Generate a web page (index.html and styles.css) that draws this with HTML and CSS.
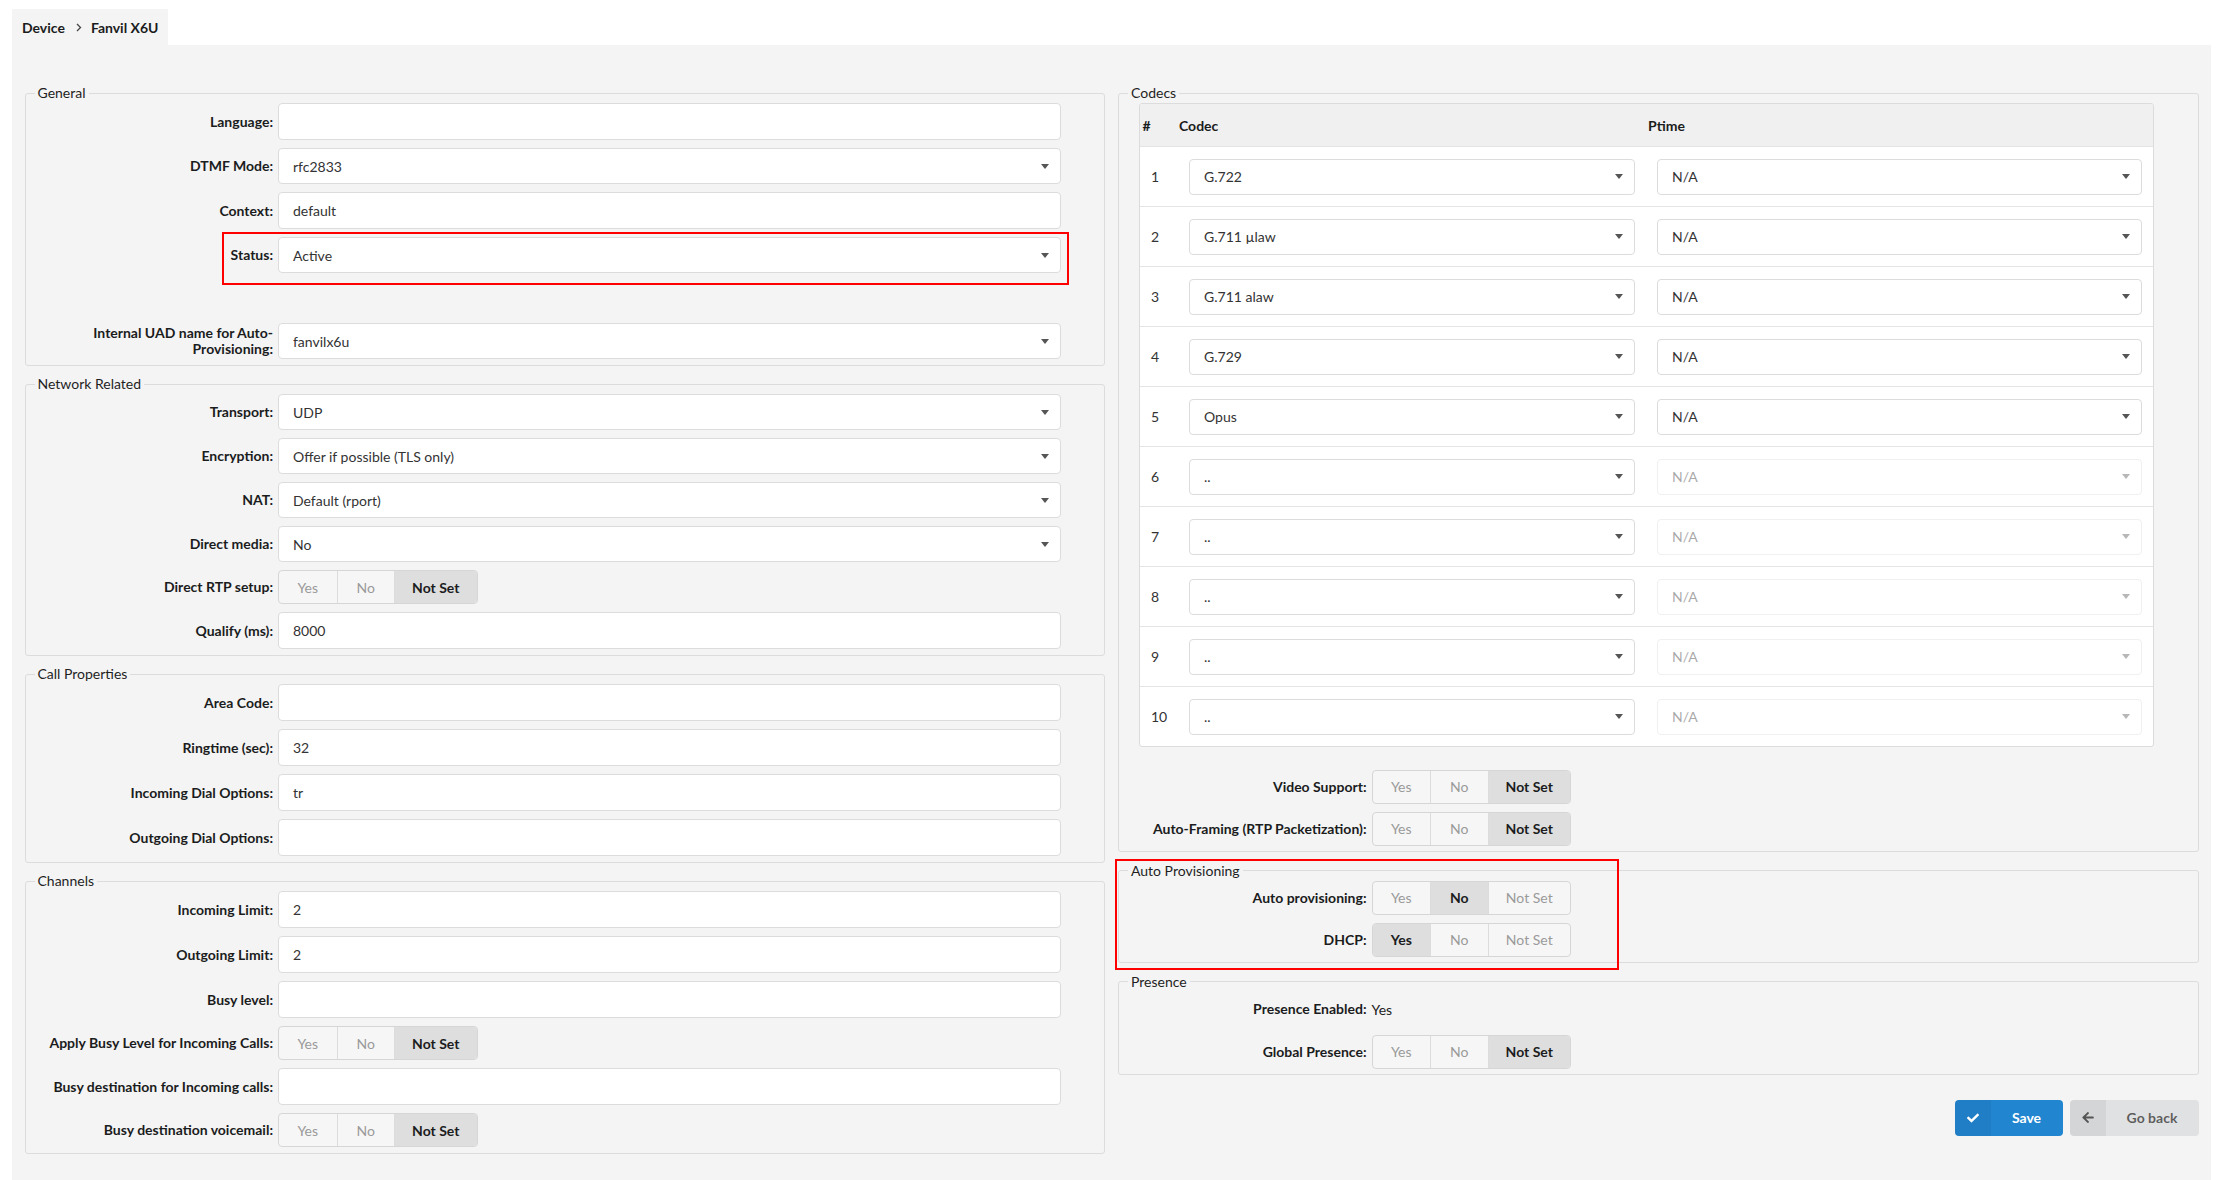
FILE: index.html
```html
<!DOCTYPE html>
<html lang="en">
<head>
<meta charset="utf-8">
<title>Device - Fanvil X6U</title>
<link rel="stylesheet" href="styles.css">
</head>
<body>
<div class="page">
  <div class="tabs">
    <div class="tab">
      <span>Device</span>
      <svg class="chev" width="6" height="9" viewBox="0 0 6 9"><path d="M1 1l3.5 3.5L1 8" fill="none" stroke="#444" stroke-width="1.3"/></svg>
      <span>Fanvil X6U</span>
    </div>
  </div>
  <div class="content">
    <div class="col">
      <fieldset class="fs">
        <legend>General</legend>
        <div class="field"><label>Language:</label><div class="input"></div></div>
        <div class="field"><label>DTMF Mode:</label><div class="input select"><span>rfc2833</span><svg class="caret" viewBox="0 0 8 5"><path d="M0 0h8L4 5z"/></svg></div></div>
        <div class="field"><label>Context:</label><div class="input">default</div></div>
        <div class="field annot status-annot"><label>Status:</label><div class="input select"><span>Active</span><svg class="caret" viewBox="0 0 8 5"><path d="M0 0h8L4 5z"/></svg></div></div>
        <div class="field spacer"></div>
        <div class="field"><label>Internal UAD name for Auto-<br>Provisioning:</label><div class="input select"><span>fanvilx6u</span><svg class="caret" viewBox="0 0 8 5"><path d="M0 0h8L4 5z"/></svg></div></div>
      </fieldset>

      <fieldset class="fs">
        <legend>Network Related</legend>
        <div class="field"><label>Transport:</label><div class="input select"><span>UDP</span><svg class="caret" viewBox="0 0 8 5"><path d="M0 0h8L4 5z"/></svg></div></div>
        <div class="field"><label>Encryption:</label><div class="input select"><span>Offer if possible (TLS only)</span><svg class="caret" viewBox="0 0 8 5"><path d="M0 0h8L4 5z"/></svg></div></div>
        <div class="field"><label>NAT:</label><div class="input select"><span>Default (rport)</span><svg class="caret" viewBox="0 0 8 5"><path d="M0 0h8L4 5z"/></svg></div></div>
        <div class="field"><label>Direct media:</label><div class="input select"><span>No</span><svg class="caret" viewBox="0 0 8 5"><path d="M0 0h8L4 5z"/></svg></div></div>
        <div class="field"><label>Direct RTP setup:</label><div class="toggle"><span>Yes</span><span>No</span><span class="on">Not Set</span></div></div>
        <div class="field"><label>Qualify (ms):</label><div class="input">8000</div></div>
      </fieldset>

      <fieldset class="fs">
        <legend>Call Properties</legend>
        <div class="field"><label>Area Code:</label><div class="input"></div></div>
        <div class="field"><label>Ringtime (sec):</label><div class="input">32</div></div>
        <div class="field"><label>Incoming Dial Options:</label><div class="input">tr</div></div>
        <div class="field"><label>Outgoing Dial Options:</label><div class="input"></div></div>
      </fieldset>

      <fieldset class="fs last">
        <legend>Channels</legend>
        <div class="field"><label>Incoming Limit:</label><div class="input">2</div></div>
        <div class="field"><label>Outgoing Limit:</label><div class="input">2</div></div>
        <div class="field"><label>Busy level:</label><div class="input"></div></div>
        <div class="field"><label>Apply Busy Level for Incoming Calls:</label><div class="toggle"><span>Yes</span><span>No</span><span class="on">Not Set</span></div></div>
        <div class="field"><label>Busy destination for Incoming calls:</label><div class="input"></div></div>
        <div class="field"><label>Busy destination voicemail:</label><div class="toggle"><span>Yes</span><span>No</span><span class="on">Not Set</span></div></div>
      </fieldset>
    </div>

    <div class="col">
      <fieldset class="fs">
        <legend>Codecs</legend>
        <div class="ctable">
          <div class="chead"><span>#</span><span>Codec</span><span>Ptime</span></div>
          <div class="crow"><span class="num">1</span><div class="cc"><div class="input select"><span>G.722</span><svg class="caret" viewBox="0 0 8 5"><path d="M0 0h8L4 5z"/></svg></div></div><div class="cp"><div class="input select"><span>N/A</span><svg class="caret" viewBox="0 0 8 5"><path d="M0 0h8L4 5z"/></svg></div></div></div>
          <div class="crow"><span class="num">2</span><div class="cc"><div class="input select"><span>G.711 µlaw</span><svg class="caret" viewBox="0 0 8 5"><path d="M0 0h8L4 5z"/></svg></div></div><div class="cp"><div class="input select"><span>N/A</span><svg class="caret" viewBox="0 0 8 5"><path d="M0 0h8L4 5z"/></svg></div></div></div>
          <div class="crow"><span class="num">3</span><div class="cc"><div class="input select"><span>G.711 alaw</span><svg class="caret" viewBox="0 0 8 5"><path d="M0 0h8L4 5z"/></svg></div></div><div class="cp"><div class="input select"><span>N/A</span><svg class="caret" viewBox="0 0 8 5"><path d="M0 0h8L4 5z"/></svg></div></div></div>
          <div class="crow"><span class="num">4</span><div class="cc"><div class="input select"><span>G.729</span><svg class="caret" viewBox="0 0 8 5"><path d="M0 0h8L4 5z"/></svg></div></div><div class="cp"><div class="input select"><span>N/A</span><svg class="caret" viewBox="0 0 8 5"><path d="M0 0h8L4 5z"/></svg></div></div></div>
          <div class="crow"><span class="num">5</span><div class="cc"><div class="input select"><span>Opus</span><svg class="caret" viewBox="0 0 8 5"><path d="M0 0h8L4 5z"/></svg></div></div><div class="cp"><div class="input select"><span>N/A</span><svg class="caret" viewBox="0 0 8 5"><path d="M0 0h8L4 5z"/></svg></div></div></div>
          <div class="crow"><span class="num">6</span><div class="cc"><div class="input select"><span>..</span><svg class="caret" viewBox="0 0 8 5"><path d="M0 0h8L4 5z"/></svg></div></div><div class="cp"><div class="input select disabled"><span>N/A</span><svg class="caret" viewBox="0 0 8 5"><path d="M0 0h8L4 5z"/></svg></div></div></div>
          <div class="crow"><span class="num">7</span><div class="cc"><div class="input select"><span>..</span><svg class="caret" viewBox="0 0 8 5"><path d="M0 0h8L4 5z"/></svg></div></div><div class="cp"><div class="input select disabled"><span>N/A</span><svg class="caret" viewBox="0 0 8 5"><path d="M0 0h8L4 5z"/></svg></div></div></div>
          <div class="crow"><span class="num">8</span><div class="cc"><div class="input select"><span>..</span><svg class="caret" viewBox="0 0 8 5"><path d="M0 0h8L4 5z"/></svg></div></div><div class="cp"><div class="input select disabled"><span>N/A</span><svg class="caret" viewBox="0 0 8 5"><path d="M0 0h8L4 5z"/></svg></div></div></div>
          <div class="crow"><span class="num">9</span><div class="cc"><div class="input select"><span>..</span><svg class="caret" viewBox="0 0 8 5"><path d="M0 0h8L4 5z"/></svg></div></div><div class="cp"><div class="input select disabled"><span>N/A</span><svg class="caret" viewBox="0 0 8 5"><path d="M0 0h8L4 5z"/></svg></div></div></div>
          <div class="crow"><span class="num">10</span><div class="cc"><div class="input select"><span>..</span><svg class="caret" viewBox="0 0 8 5"><path d="M0 0h8L4 5z"/></svg></div></div><div class="cp"><div class="input select disabled"><span>N/A</span><svg class="caret" viewBox="0 0 8 5"><path d="M0 0h8L4 5z"/></svg></div></div></div>
        </div>
        <div class="field"><label>Video Support:</label><div class="toggle"><span>Yes</span><span>No</span><span class="on">Not Set</span></div></div>
        <div class="field"><label>Auto-Framing (RTP Packetization):</label><div class="toggle"><span>Yes</span><span>No</span><span class="on">Not Set</span></div></div>
      </fieldset>

      <div class="annot-wrap">
        <fieldset class="fs flush">
          <legend>Auto Provisioning</legend>
          <div class="field"><label>Auto provisioning:</label><div class="toggle"><span>Yes</span><span class="on">No</span><span>Not Set</span></div></div>
          <div class="field"><label>DHCP:</label><div class="toggle"><span class="on">Yes</span><span>No</span><span>Not Set</span></div></div>
        </fieldset>
      </div>

      <fieldset class="fs">
        <legend>Presence</legend>
        <div class="field static"><label>Presence Enabled:</label><span class="value">Yes</span></div>
        <div class="field"><label>Global Presence:</label><div class="toggle"><span>Yes</span><span>No</span><span class="on">Not Set</span></div></div>
      </fieldset>

      <div class="actions">
        <div class="btn save">
          <span class="ic"><svg width="12" height="12" viewBox="0 0 512 512"><path fill="#fff" d="M173.898 439.404l-166.4-166.4c-9.997-9.997-9.997-26.206 0-36.204l36.203-36.204c9.997-9.998 26.207-9.998 36.204 0L192 312.69 432.095 72.596c9.997-9.997 26.207-9.997 36.204 0l36.203 36.204c9.997 9.997 9.997 26.206 0 36.204l-294.4 294.401c-9.998 9.997-26.207 9.997-36.204-.001z"/></svg></span>
          <span class="tx">Save</span>
        </div>
        <div class="btn back">
          <span class="ic"><svg width="12" height="13" viewBox="0 0 448 512"><path fill="#555" d="M257.5 445.1l-22.2 22.2c-9.4 9.4-24.6 9.4-33.9 0L7 273c-9.4-9.4-9.4-24.6 0-33.9L201.4 44.7c9.4-9.4 24.6-9.4 33.9 0l22.2 22.2c9.5 9.5 9.3 25-.4 34.3L136.6 216H424c13.3 0 24 10.7 24 24v32c0 13.3-10.7 24-24 24H136.6l120.5 114.8c9.8 9.3 10 24.8.4 34.3z"/></svg></span>
          <span class="tx">Go back</span>
        </div>
      </div>
    </div>
  </div>
</div>
</body>
</html>
```
FILE: styles.css
```css
* { box-sizing: border-box; }

html, body { overflow: hidden; }

body {
  margin: 0;
  background: #fff;
  font-family: Lato, "Noto Sans", Arial, sans-serif;
  font-size: 14px;
  color: #222;
}

.page {
  padding: 9px 16px 0 12px;
}

.tabs {
  display: flex;
}

.tab {
  display: flex;
  align-items: center;
  height: 36px;
  padding: 0 10px;
  background: #f4f4f4;
  font-weight: 700;
  font-size: 14px;
  color: #1b1c1d;
}

.chev {
  margin: 0 9px 0 11px;
}

.content {
  display: grid;
  grid-template-columns: 1fr 1fr;
  column-gap: 13px;
  align-items: start;
  padding: 38px 12.5px 40px;
  background: #f4f4f4;
}

.col {
  min-width: 0;
}

.fs {
  min-width: 0;
  margin: 0 0 8.5px;
  padding: 0 43.5px 5.5px 9px;
  border: 1px solid #dcdcdc;
  border-radius: 3px;
}

.fs.last,
.fs.flush {
  margin-bottom: 0;
}

.fs legend {
  padding: 0 3px;
  font-size: 14px;
  line-height: 20px;
  color: #1f1f1f;
}

.field {
  display: grid;
  grid-template-columns: 238.5px 1fr;
  column-gap: 5px;
  align-items: center;
  margin-bottom: 8px;
}

.field:last-child {
  margin-bottom: 0;
}

.field > label {
  text-align: right;
  font-weight: 700;
  font-size: 14px;
  line-height: 16px;
  color: #1b1c1d;
}

.field.spacer {
  height: 34px;
}

.field.static {
  height: 35px;
}

.value {
  font-size: 14px;
  color: #222;
}

.input {
  display: flex;
  align-items: center;
  height: 37px;
  padding: 0 11px 0 14px;
  background: #fff;
  border: 1px solid #dcdcdc;
  border-radius: 4px;
  font-size: 14px;
  color: #333;
  white-space: nowrap;
}

.input.select {
  height: 36px;
  justify-content: space-between;
}

.caret {
  width: 8px;
  height: 5px;
  fill: #555;
  flex: none;
}

.input.disabled {
  opacity: 0.42;
}

/* toggles */
.toggle {
  display: flex;
  width: max-content;
  height: 34px;
  border: 1px solid #d6d6d6;
  border-radius: 4px;
  overflow: hidden;
  background: #f6f6f6;
}

.toggle span {
  display: flex;
  align-items: center;
  justify-content: center;
  width: 57.5px;
  font-size: 14px;
  color: #9a9a9a;
}

.toggle span + span {
  border-left: 1px solid #dcdcdc;
}

.toggle span:last-child {
  width: 82.5px;
}

.toggle span.on {
  background: #dedede;
  color: #1b1c1d;
  font-weight: 700;
}

/* codecs table */
.ctable {
  margin: 0 0 22.5px 11px;
  background: #fff;
  border: 1px solid #dcdcdc;
  border-radius: 3px;
  overflow: hidden;
}

.chead,
.crow {
  display: grid;
  grid-template-columns: 36.5px 469px 1fr;
  align-items: center;
}

.chead {
  height: 42px;
  background: #f0f0f0;
  font-weight: 700;
  color: #1b1c1d;
}

.chead span {
  padding-left: 2.5px;
}

.crow {
  height: 60px;
  border-top: 1px solid #e4e4e4;
}

.num {
  padding-left: 11px;
  color: #333;
}

.cc {
  padding: 0 10.5px 0 12.5px;
}

.cp {
  padding: 0 11px 0 11.5px;
}

/* annotations */
.annot {
  position: relative;
}

.annot::after {
  content: "";
  position: absolute;
  border: 2px solid #f00;
  pointer-events: none;
}

.status-annot::after {
  left: 187.5px;
  top: -5px;
  right: -8.5px;
  bottom: -12px;
}

.annot-wrap {
  position: relative;
  margin-bottom: 8.5px;
}

.annot-wrap::after {
  content: "";
  position: absolute;
  left: -3px;
  top: -1.5px;
  width: 500px;
  bottom: -7px;
  border: 2px solid #f00;
  pointer-events: none;
}

/* buttons */
.actions {
  display: flex;
  justify-content: flex-end;
  gap: 7px;
  margin-top: 24.5px;
}

.btn {
  display: flex;
  height: 36px;
  border-radius: 4px;
  overflow: hidden;
  font-weight: 700;
  font-size: 14px;
}

.btn .ic {
  display: flex;
  align-items: center;
  justify-content: center;
  width: 36px;
  background: rgba(0, 0, 0, 0.05);
}

.btn .tx {
  flex: 1;
  display: flex;
  align-items: center;
  justify-content: center;
}

.btn.save {
  width: 108px;
  background: #2185d0;
  color: #fff;
}

.btn.back {
  width: 129px;
  background: #e0e1e2;
  color: rgba(0, 0, 0, 0.6);
}
```
